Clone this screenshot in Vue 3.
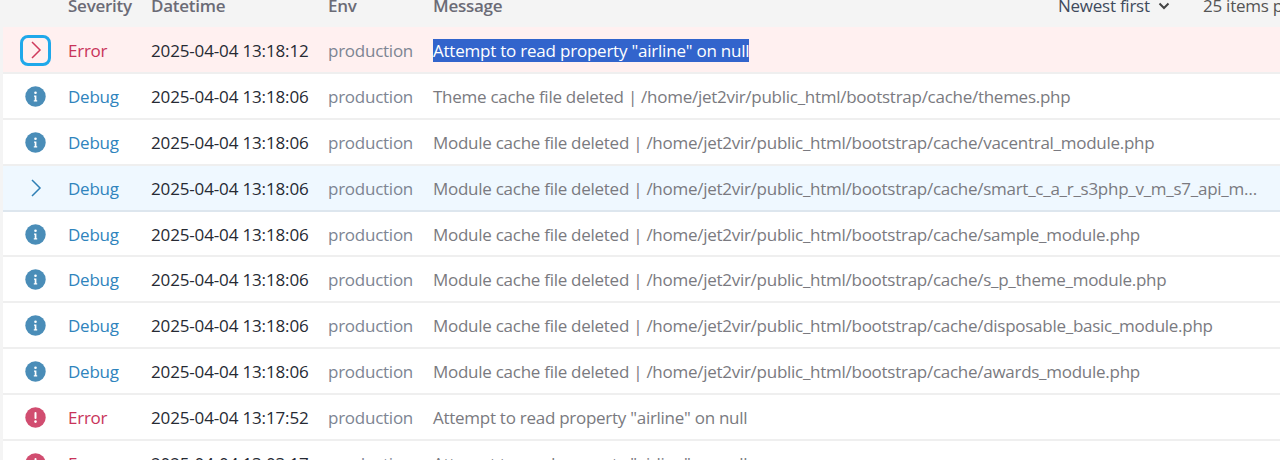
<script setup>
const rows = [
  { kind: 'error', label: 'Error', time: '2025-04-04 13:18:12', msg: 'Attempt to read property "airline" on null', state: 'active' },
  { kind: 'debug', label: 'Debug', time: '2025-04-04 13:18:06', msg: 'Theme cache file deleted | /home/jet2vir/public_html/bootstrap/cache/themes.php' },
  { kind: 'debug', label: 'Debug', time: '2025-04-04 13:18:06', msg: 'Module cache file deleted | /home/jet2vir/public_html/bootstrap/cache/vacentral_module.php' },
  { kind: 'debug', label: 'Debug', time: '2025-04-04 13:18:06', msg: 'Module cache file deleted | /home/jet2vir/public_html/bootstrap/cache/smart_c_a_r_s3php_v_m_s7_api_m…', state: 'hover' },
  { kind: 'debug', label: 'Debug', time: '2025-04-04 13:18:06', msg: 'Module cache file deleted | /home/jet2vir/public_html/bootstrap/cache/sample_module.php' },
  { kind: 'debug', label: 'Debug', time: '2025-04-04 13:18:06', msg: 'Module cache file deleted | /home/jet2vir/public_html/bootstrap/cache/s_p_theme_module.php' },
  { kind: 'debug', label: 'Debug', time: '2025-04-04 13:18:06', msg: 'Module cache file deleted | /home/jet2vir/public_html/bootstrap/cache/disposable_basic_module.php' },
  { kind: 'debug', label: 'Debug', time: '2025-04-04 13:18:06', msg: 'Module cache file deleted | /home/jet2vir/public_html/bootstrap/cache/awards_module.php' },
  { kind: 'error', label: 'Error', time: '2025-04-04 13:17:52', msg: 'Attempt to read property "airline" on null' },
  { kind: 'error', label: 'Error', time: '2025-04-04 13:03:17', msg: 'Attempt to read property "airline" on null' },
]
</script>

<template>
  <div class="page">
    <div class="head">
      <span class="h-sev">Severity</span>
      <span class="h-date">Datetime</span>
      <span class="h-env">Env</span>
      <span class="h-msg">Message</span>
      <span class="sort">Newest first
        <svg class="caret" width="12" height="12" viewBox="0 0 12 12"><path d="M1.5 3.5 6 8l4.5-4.5" fill="none" stroke="#444" stroke-width="2"/></svg>
      </span>
      <span class="per">25 items per page</span>
    </div>
    <div v-for="(r, i) in rows" :key="i" class="row" :class="[r.kind, r.state]">
      <div class="ico">
        <span v-if="r.state === 'active'" class="ring">
          <svg width="12" height="20" viewBox="0 0 12 20"><path d="M2 2l8 8-8 8" fill="none" stroke="#cf3a5c" stroke-width="1.5"/></svg>
        </span>
        <svg v-else-if="r.state === 'hover'" width="12" height="20" viewBox="0 0 12 20"><path d="M2 2l8 8-8 8" fill="none" stroke="#2f7fb5" stroke-width="1.5"/></svg>
        <svg v-else-if="r.kind === 'debug'" width="21" height="21" viewBox="0 0 21 21">
          <circle cx="10.5" cy="10.5" r="10.2" fill="#4a8db8"/>
          <circle cx="10.5" cy="6.8" r="1.3" fill="#fff"/>
          <path d="M9 9.6h2.4v4.6h.8v1.2H8.8v-1.2h.9v-3.4H9z" fill="#fff"/>
        </svg>
        <svg v-else width="21" height="21" viewBox="0 0 21 21">
          <circle cx="10.5" cy="10.5" r="10.2" fill="#d14d70"/>
          <rect x="9.5" y="5" width="2" height="7" rx="1" fill="#fff"/>
          <circle cx="10.5" cy="14.6" r="1.3" fill="#fff"/>
        </svg>
      </div>
      <div class="sev">{{ r.label }}</div>
      <div class="date">{{ r.time }}</div>
      <div class="env">production</div>
      <div class="msg"><span :class="{ sel: r.state === 'active' }">{{ r.msg }}</span></div>
    </div>
  </div>
</template>

<style>
html, body { margin: 0; background: #f4f4f4; }
</style>

<style scoped>
.page {
  height: 460px;
  overflow: hidden;
  background: #f4f4f4;
  font-family: "Open Sans", "Noto Sans", sans-serif;
  font-size: 17px;
  letter-spacing: -0.25px;
}
.head {
  height: 27px;
  display: flex;
  align-items: flex-end;
  padding: 0 0 11px 68px;
  box-sizing: border-box;
  overflow: hidden;
  color: #6b6b76;
  font-weight: 600;
  line-height: 20px;
  white-space: nowrap;
}
.h-sev { width: 83px; flex: none; }
.h-date { width: 177px; flex: none; }
.h-env { width: 105px; flex: none; }
.h-msg { width: 625px; flex: none; }
.sort { width: 145px; flex: none; color: #3f4a5c; font-weight: 400; display: flex; align-items: center; gap: 8px; }
.per { color: #555; font-weight: 400; }
.row {
  height: 45.87px;
  margin-left: 3px;
  padding-top: 1px;
  box-sizing: border-box;
  background: #fff;
  border-bottom: 2px solid #efefef;
  display: flex;
  align-items: center;
  white-space: nowrap;
}
.row:nth-child(2) { height: 47px; }
.row.active { background: #fff0f0; }
.row.hover { background: #eff8ff; border-bottom-color: #dde6ee; }
.ico { width: 65px; flex: none; display: flex; justify-content: center; }
.ring {
  width: 25px;
  height: 25px;
  border: 3px solid #1fa8ea;
  border-radius: 8px;
  display: flex;
  align-items: center;
  justify-content: center;
}
.sev { width: 83px; flex: none; }
.error .sev { color: #c9345a; }
.debug .sev { color: #2f84bd; }
.date { width: 177px; flex: none; color: #262a33; letter-spacing: -0.15px; }
.env { width: 105px; flex: none; color: #7d8593; }
.msg { color: #7a7a80; letter-spacing: -0.27px; }
.sel { background: #3264cc; color: #fff; letter-spacing: -0.22px; }
</style>
